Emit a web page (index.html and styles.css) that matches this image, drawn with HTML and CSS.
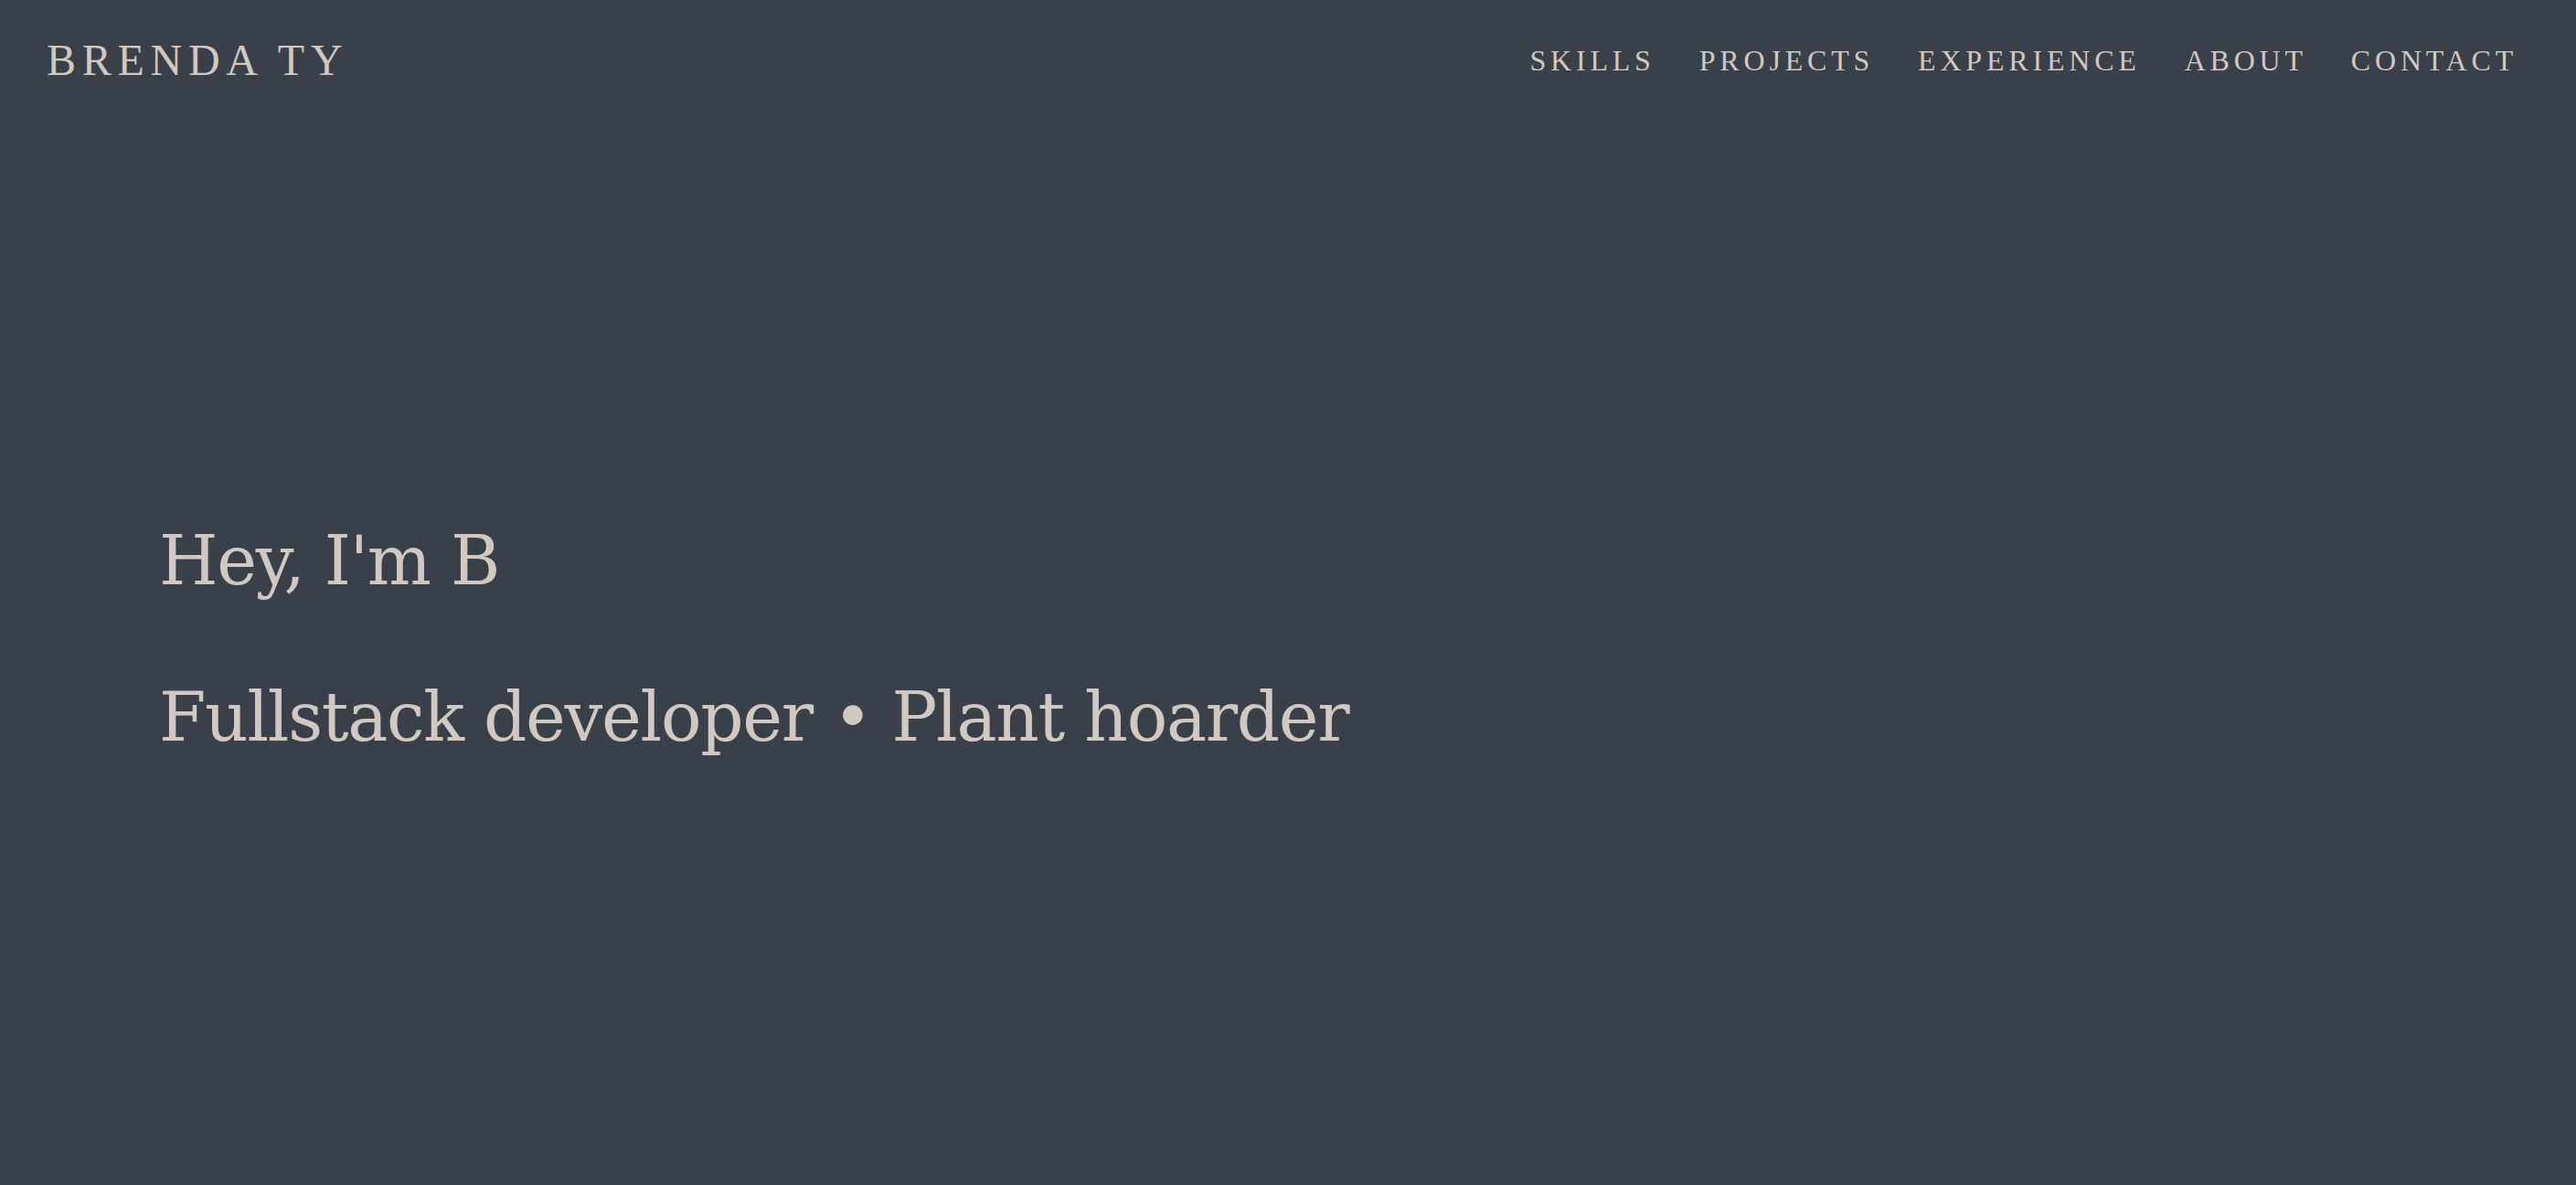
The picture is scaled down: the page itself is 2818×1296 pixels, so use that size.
FILE: index.html
```html
<!DOCTYPE html>
<html lang="en">
<head>
<meta charset="utf-8">
<title>Brenda Ty</title>
<link rel="stylesheet" href="styles.css">
</head>
<body>
<div class="page">
  <header class="header">
    <a class="logo" href="#">BRENDA TY</a>
    <nav class="nav">
      <a href="#skills">SKILLS</a>
      <a href="#projects">PROJECTS</a>
      <a href="#experience">EXPERIENCE</a>
      <a href="#about">ABOUT</a>
      <a href="#contact">CONTACT</a>
    </nav>
  </header>
  <main class="hero">
    <h1 class="hero-line">Hey, I'm B</h1>
    <p class="hero-line">Fullstack developer • Plant hoarder</p>
  </main>
</div>
</body>
</html>
```
FILE: styles.css
```css
html, body {
  margin: 0;
  padding: 0;
  background: #394049;
  color: #d0c8c1;
  font-family: "Liberation Serif", "Times New Roman", serif;
}
.page {
  min-height: 1296px;
  display: flex;
  flex-direction: column;
}
.header {
  display: flex;
  justify-content: space-between;
  align-items: center;
  height: 132px;
  padding: 0 64px 0 51px;
}
.logo {
  color: inherit;
  text-decoration: none;
  font-size: 48px;
  letter-spacing: 0.14em;
  line-height: 1;
}
.nav {
  display: flex;
  gap: 48px;
}
.nav a {
  color: inherit;
  text-decoration: none;
  font-size: 32px;
  letter-spacing: 0.15em;
  line-height: 1;
}
.hero {
  display: flex;
  flex-direction: column;
  padding: 444px 0 0 174px;
  gap: 96px;
}
.hero-line {
  margin: 0;
  font-family: "DejaVu Serif", "Liberation Serif", serif;
  font-weight: normal;
  font-size: 74px;
  line-height: 75px;
  letter-spacing: -1.3px;
  white-space: nowrap;
}
```
